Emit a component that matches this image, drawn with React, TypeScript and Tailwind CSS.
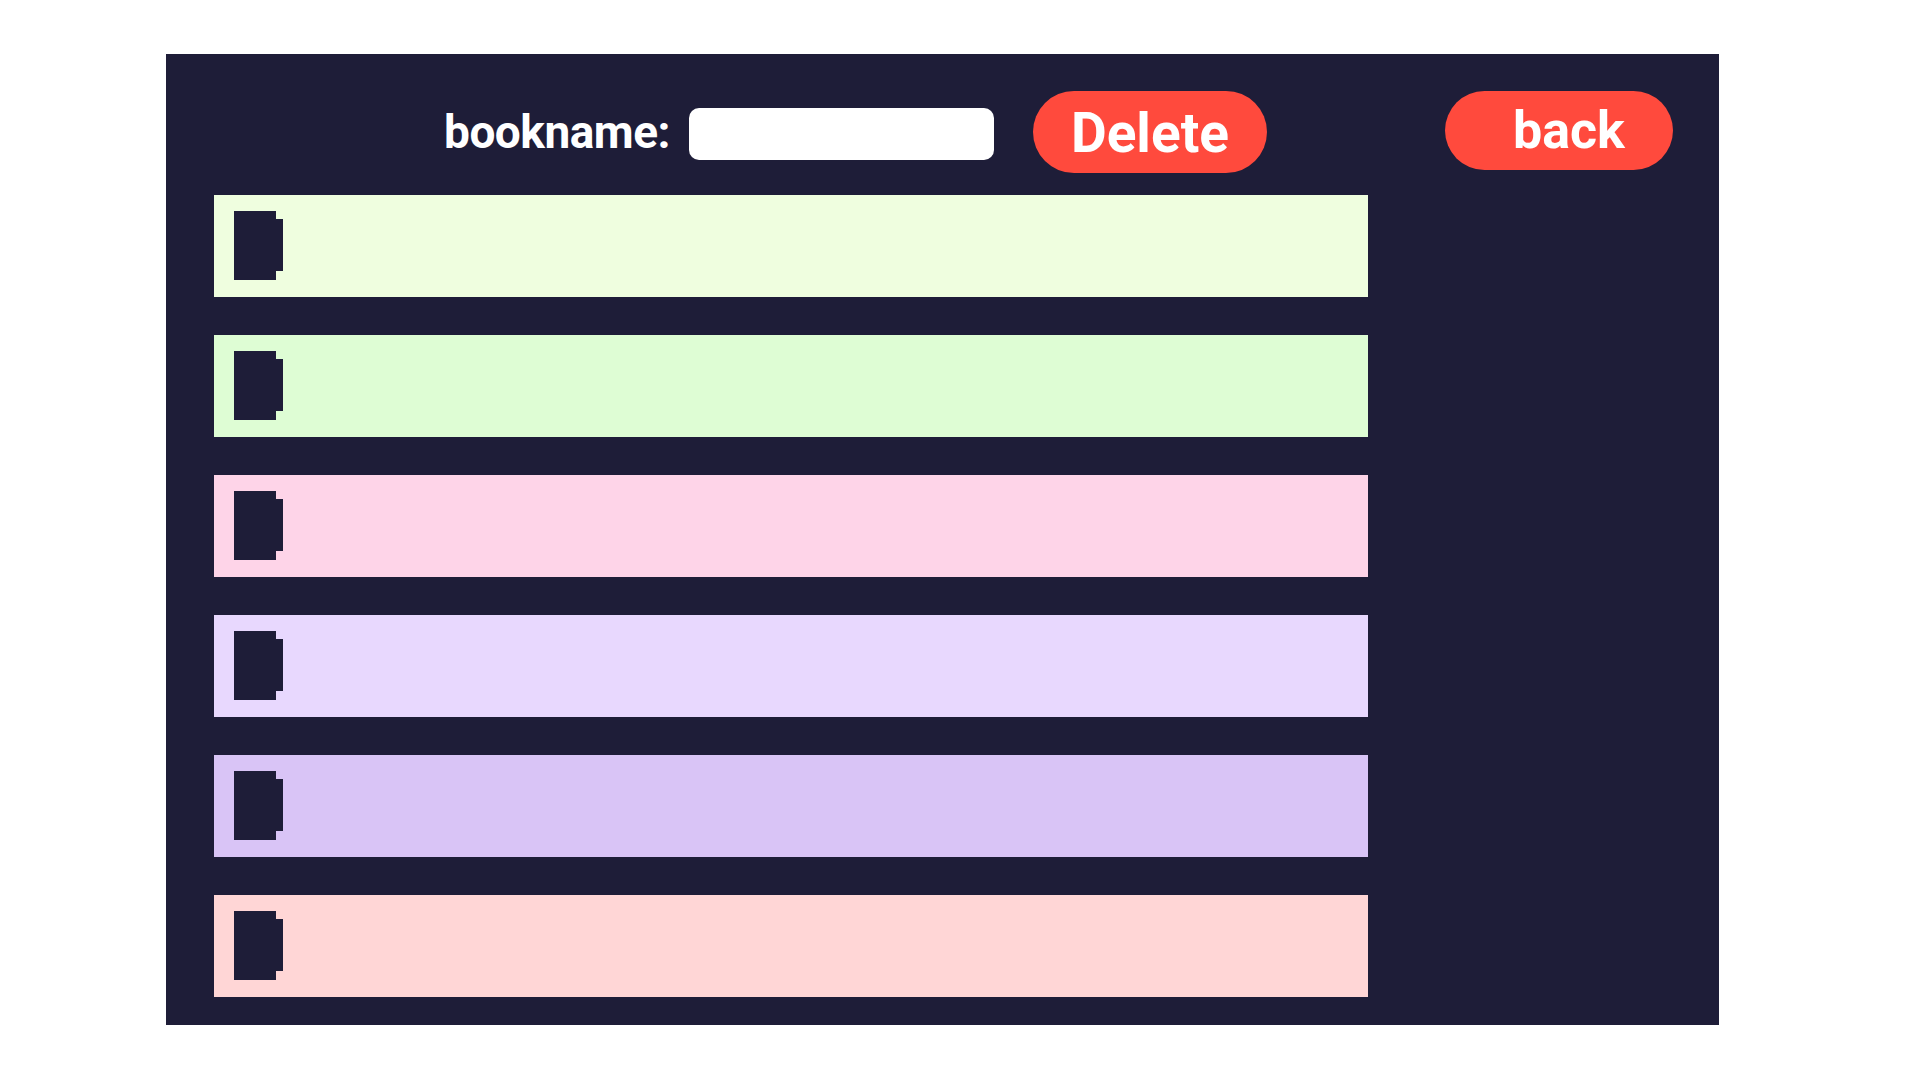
import React from "react";

const rows = [
  "bg-[#effedf]",
  "bg-[#defdd4]",
  "bg-[#fed4e8]",
  "bg-[#e8d8fe]",
  "bg-[#d9c4f6]",
  "bg-[#ffd6d6]",
];

function NoteIcon() {
  return (
    <svg width="50" height="69" viewBox="0 0 50 69" className="block">
      <path d="M0 0 H42 V8 H49 V60 H42 V69 H0 Z" fill="#1e1d38" />
    </svg>
  );
}

export default function App() {
  return (
    <div className="min-h-screen bg-white pt-[54px] pl-[166px] font-['Roboto',sans-serif]">
      <div className="w-[1553px] h-[971px] bg-[#1e1d38] pt-[37px] pl-[48px]">
        {/* header */}
        <div className="flex items-center h-[82px] pl-[230px]">
          <span className="text-white font-bold text-[46px] leading-none tracking-[-0.5px]">
            bookname:
          </span>
          <input
            type="text"
            className="ml-[19px] w-[305px] h-[52px] mt-[4px] rounded-[10px] bg-white outline-none border-0"
          />
          <button className="ml-[39px] w-[234px] h-[82px] rounded-full bg-[#ff4a3d] text-white font-bold text-[55px] leading-none flex items-center justify-center pt-[2px]">
            Delete
          </button>
          <button className="ml-[178px] w-[228px] h-[79px] -mt-[3px] rounded-full bg-[#ff4a3d] text-white font-bold text-[52px] leading-none flex items-center justify-center pl-[20px]">
            back
          </button>
        </div>

        {/* list */}
        <div className="mt-[22px] flex flex-col gap-[38px] w-[1154px]">
          {rows.map((c, i) => (
            <div key={i} className={`${c} h-[102px] pl-[20px] pt-[16px]`}>
              <NoteIcon />
            </div>
          ))}
        </div>
      </div>
    </div>
  );
}
